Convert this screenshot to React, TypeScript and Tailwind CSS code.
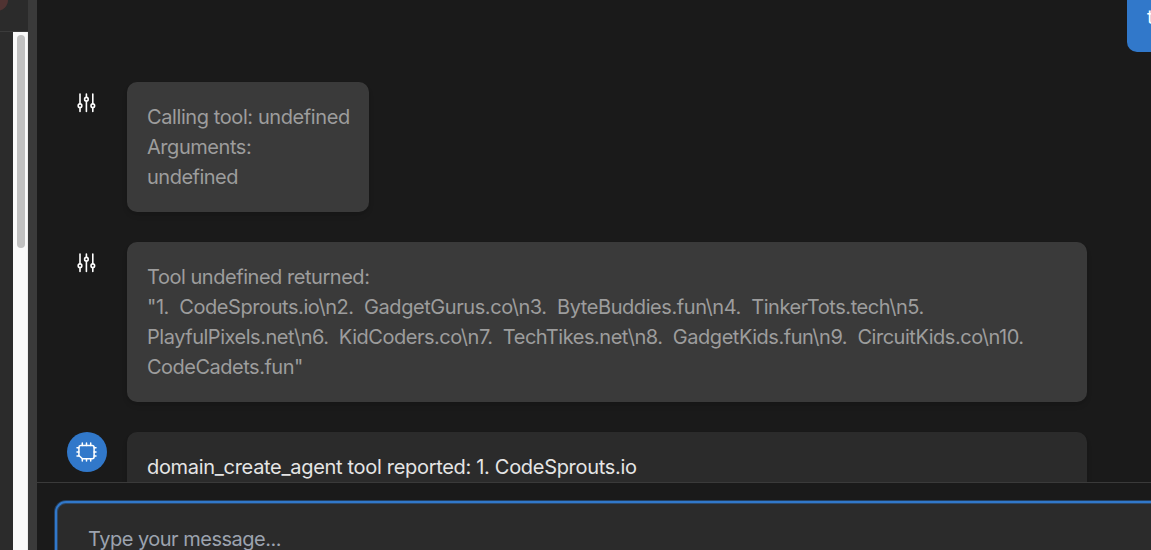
import React from "react";

function SlidersIcon() {
  return (
    <svg className="mt-px" width="20" height="20" viewBox="0 0 20 20" fill="none" stroke="#fff" strokeWidth="1.6" strokeLinecap="round">
      <path d="M3 1v9.4M3 15v3.4M9.4 1v2.8M9.4 8.3v10.1M15.8 1v9.4M15.8 15v3.4" />
      <circle cx="3" cy="12.7" r="1.8" />
      <circle cx="9.4" cy="6.2" r="1.8" />
      <circle cx="15.8" cy="12.7" r="1.8" />
    </svg>
  );
}

function ChipIcon() {
  return (
    <svg width="24" height="24" viewBox="0 0 24 24" fill="none" stroke="#fff" strokeWidth="1.5" strokeLinecap="round" strokeLinejoin="round">
      <path d="M5.7 5.5h11.4a2 2 0 0 1 2 2v9.3a2 2 0 0 1-2 2H7.4L3.9 15.5v-8a2 2 0 0 1 1.8-2z" />
      <path d="M7.3 5.5V3M11.5 5.5V3M15.7 5.5V3M7.3 18.8V21M11.5 18.8V21M15.7 18.8V21M3.9 7.8H2M3.9 12H2M3.9 16H2M19.1 7.8H21M19.1 12H21M19.1 16H21" />
    </svg>
  );
}

function Bubble({ className, children }: { className: string; children: React.ReactNode }) {
  return (
    <div className={`rounded-[10px] px-5 py-5 shadow-md whitespace-pre leading-[30px] ${className}`}>
      {children}
    </div>
  );
}

export default function App() {
  return (
    <div className="flex h-[550px] w-[1151px] overflow-hidden bg-[#1a1a1a] font-['Inter','Liberation_Sans',sans-serif] text-[20px]">
      <aside className="flex w-7 shrink-0 flex-col bg-[#2b2b2b]">
        <div className="h-8 shrink-0 overflow-hidden border-b border-[#3b3b3b]">
          <div className="-mt-[11px] -ml-[14px] size-[22px] rounded-full bg-[#503332]" />
        </div>
        <div className="ml-[13px] flex-1 border-r border-[#ededed] bg-[#fafafa] pt-[3px] pl-1">
          <div className="h-[213px] w-2 rounded-full bg-[#c1c1c1]" />
        </div>
      </aside>
      <div className="w-[9px] shrink-0 bg-[#3a3a3a]" />

      <main className="flex min-w-0 flex-1 flex-col">
        <section className="flex h-[482px] shrink-0 flex-col overflow-hidden pl-[30px]">
          <div className="flex h-[52px] shrink-0 justify-end">
            <div className="w-6 overflow-hidden rounded-bl-[10px] bg-[#3178ca] pl-5 leading-[34px] text-white">t</div>
          </div>
          <div className="mt-[30px] flex shrink-0 gap-5">
            <div className="flex size-10 items-center justify-center"><SlidersIcon /></div>
            <Bubble className="h-[130px] w-[242px] bg-[#3a3a3a] text-[#9d9d9d]">
              <p className="tracking-[-0.41px]">Calling tool: undefined</p>
              <p className="tracking-[-0.45px]">Arguments:</p>
              <p className="tracking-[-0.5px]">undefined</p>
            </Bubble>
          </div>
          <div className="mt-[30px] flex shrink-0 gap-5">
            <div className="flex size-10 items-center justify-center"><SlidersIcon /></div>
            <Bubble className="h-40 w-[960px] bg-[#3a3a3a] text-[#9d9d9d]">
              <p className="tracking-[-0.46px]">Tool undefined returned:</p>
              <p className="tracking-[-0.43px]">{'"1.  CodeSprouts.io\\n2.  GadgetGurus.co\\n3.  ByteBuddies.fun\\n4.  TinkerTots.tech\\n5.'}</p>
              <p className="tracking-[-0.47px]">{"PlayfulPixels.net\\n6.  KidCoders.co\\n7.  TechTikes.net\\n8.  GadgetKids.fun\\n9.  CircuitKids.co\\n10."}</p>
              <p className="tracking-[-0.5px]">{'CodeCadets.fun"'}</p>
            </Bubble>
          </div>
          <div className="mt-[30px] flex shrink-0 gap-5">
            <div className="flex size-10 items-center justify-center rounded-full bg-[#3178ca]"><ChipIcon /></div>
            <Bubble className="h-40 w-[960px] bg-[#2b2b2b] text-[#e5e5e5]">
              <p className="tracking-[-0.31px]">domain_create_agent tool reported: 1. CodeSprouts.io</p>
            </Bubble>
          </div>
        </section>
        <footer className="h-[68px] shrink-0 overflow-hidden border-t border-[#3a3a3a] pt-[18px] pl-[18px]">
          <div className="h-24 w-[1200px] rounded-[11px] border-2 border-[#3178ca] bg-[#2b2b2b] pt-[21px] pl-[31px] leading-[30px] tracking-[-0.5px] text-[#9ca3af] shadow-[0_0_0_1px_#3178ca66,inset_0_0_0_1px_#3178ca66]">
            Type your message...
          </div>
        </footer>
      </main>
    </div>
  );
}
